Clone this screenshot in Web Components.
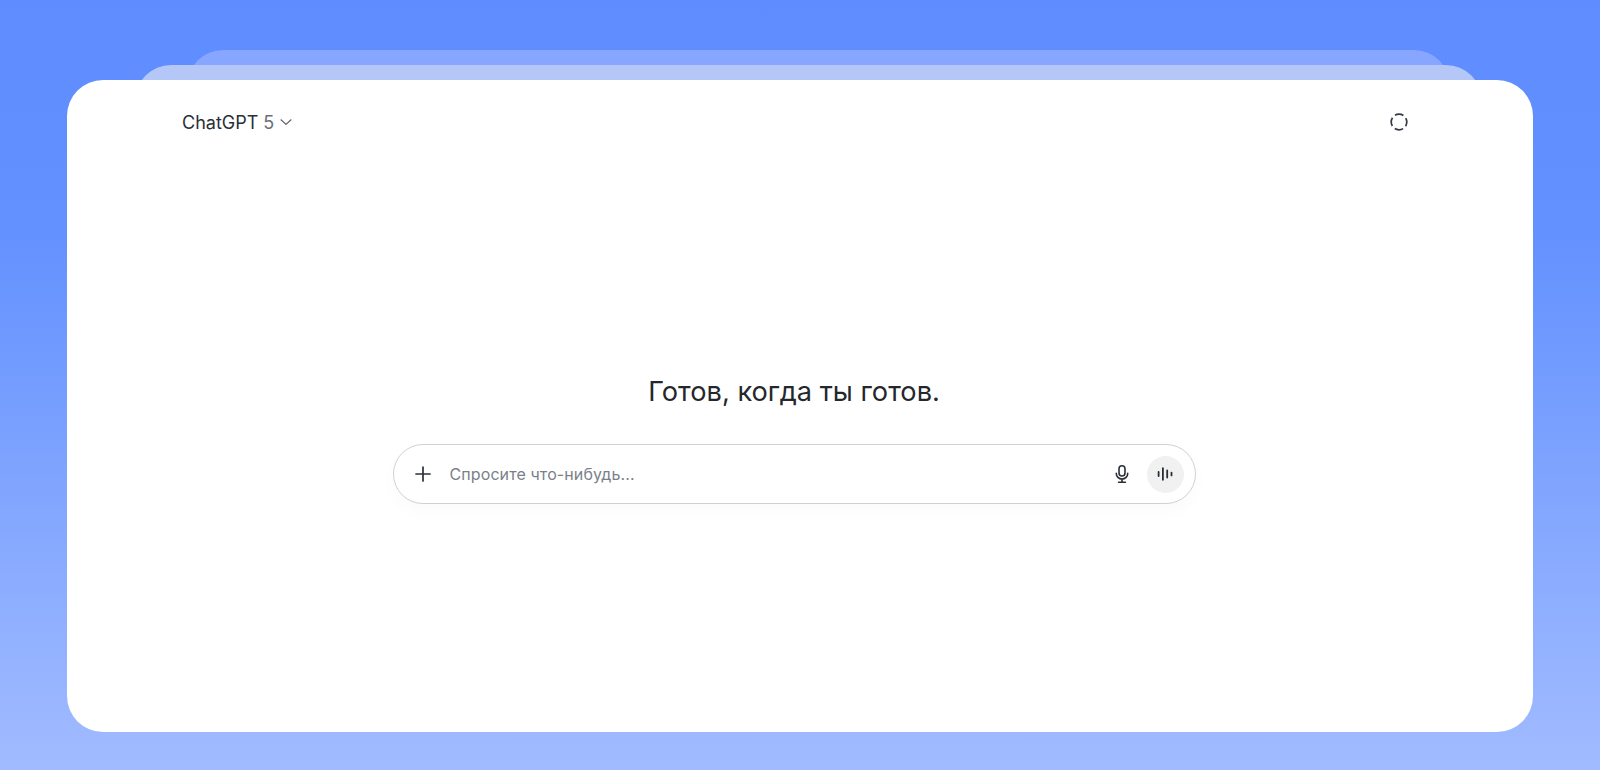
<!DOCTYPE html>
<html lang="ru">
<head>
<meta charset="utf-8">
<title>ChatGPT</title>
<style>
  html, body { margin: 0; height: 100%; }
  body { font-family: Inter, "Noto Sans", sans-serif; overflow: hidden; }
</style>
</head>
<body>
<app-stage>
  <app-window>
    <model-header slot="header" name="ChatGPT" version="5"></model-header>
    <h-title>Готов, когда ты готов.</h-title>
    <chat-composer placeholder="Спросите что-нибудь..."></chat-composer>
  </app-window>
</app-stage>

<script>
class AppStage extends HTMLElement {
    constructor () {
        super();
        var shadowRoot = this.attachShadow({mode: 'open'});
        shadowRoot.innerHTML = `
            <style>
                :host {
                    display: block;
                    box-sizing: border-box;
                    width: 1600px;
                    height: 770px;
                    padding-top: 50px;
                    background: linear-gradient(180deg, #5f8cff 0%, #6391ff 30%, #a1bbff 100%);
                }
                .layer {
                    height: 60px;
                    margin-bottom: -45px;
                    border-radius: 36px 36px 0 0;
                }
                .back { margin-left: 187px; margin-right: 150px; background: #86a6ff; }
                .mid { margin-left: 135px; margin-right: 118px; background: #b4c7f6; }
                .front { margin-left: 67px; margin-right: 67px; }
            </style>
            <div class="layer back"></div>
            <div class="layer mid"></div>
            <div class="front"><slot></slot></div>
        `;
    }
}
customElements.define('app-stage', AppStage);

class AppWindow extends HTMLElement {
    constructor () {
        super();
        var shadowRoot = this.attachShadow({mode: 'open'});
        shadowRoot.innerHTML = `
            <style>
                :host {
                    display: block;
                    box-sizing: border-box;
                    height: 652px;
                    background: #fff;
                    border-radius: 36px;
                    padding: 0 124px 0 115px;
                }
                main {
                    display: flex;
                    flex-direction: column;
                    align-items: center;
                    padding-top: 206px;
                    margin-right: 3px;
                }
            </style>
            <slot name="header"></slot>
            <main><slot></slot></main>
        `;
    }
}
customElements.define('app-window', AppWindow);

class ModelHeader extends HTMLElement {
    constructor () {
        super();
        var shadowRoot = this.attachShadow({mode: 'open'});
        shadowRoot.innerHTML = `
            <style>
                :host {
                    display: flex;
                    align-items: center;
                    justify-content: space-between;
                    height: 84px;
                    color: #2a2f37;
                }
                .model { display: flex; align-items: center; font-size: 18px; }
                .ver { color: #6b7078; margin-left: 5px; }
                svg { display: block; }
                .chev { margin-left: 5px; }
            </style>
            <div class="model">
                <span id="name"></span><span class="ver" id="ver"></span>
                <svg class="chev" width="14" height="14" viewBox="0 0 14 14" fill="none" stroke="#5d626a" stroke-width="1.2" stroke-linecap="round" stroke-linejoin="round"><path d="M2 4.8 7 9.4 12 4.8"/></svg>
            </div>
            <svg width="20" height="20" viewBox="0 0 20 20" fill="none" stroke="#343944" stroke-width="1.7">
                <circle cx="10" cy="10" r="7.8" stroke-dasharray="8.8 3.45" stroke-dashoffset="4.4"/>
            </svg>
        `;
        shadowRoot.querySelector('#name').textContent = this.getAttribute('name');
        shadowRoot.querySelector('#ver').textContent = this.getAttribute('version');
    }
}
customElements.define('model-header', ModelHeader);

class HTitle extends HTMLElement {
    constructor () {
        super();
        var shadowRoot = this.attachShadow({mode: 'open'});
        shadowRoot.innerHTML = `
            <style>
                :host {
                    display: block;
                    font-size: 27.2px;
                    line-height: 44px;
                    color: #24272c;
                    margin-bottom: 30px;
                }
            </style>
            <slot></slot>
        `;
    }
}
customElements.define('h-title', HTitle);

class ChatComposer extends HTMLElement {
    constructor () {
        super();
        var shadowRoot = this.attachShadow({mode: 'open'});
        shadowRoot.innerHTML = `
            <style>
                :host {
                    display: flex;
                    align-items: center;
                    box-sizing: border-box;
                    width: 803px;
                    height: 60px;
                    padding: 0 11px 0 19px;
                    border: 1px solid #cfd1d4;
                    border-radius: 30px;
                    background: #fff;
                    box-shadow: 0 8px 20px rgba(0,0,0,0.02);
                }
                svg { display: block; flex: none; }
                #text { flex: 1; margin-left: 17px; font-size: 16px; letter-spacing: 0.1px; color: #7b808a; }
                .mic { margin-right: 15px; }
                .voice {
                    width: 37px;
                    height: 37px;
                    border-radius: 50%;
                    background: #f1f1f2;
                    display: flex;
                    align-items: center;
                    justify-content: center;
                }
            </style>
            <svg width="20" height="20" viewBox="0 0 20 20" fill="none" stroke="#2c3038" stroke-width="1.7" stroke-linecap="round"><path d="M10 3v14M3 10h14"/></svg>
            <span id="text"></span>
            <svg class="mic" width="20" height="20" viewBox="0 0 20 20" fill="none" stroke="#2a2f37" stroke-width="1.6" stroke-linecap="round"><rect x="7" y="1.8" width="6" height="10.2" rx="3"/><path d="M4.3 9.4a5.7 5.7 0 0 0 11.4 0M10 15.2v3M6.6 18.2h6.8"/></svg>
            <div class="voice">
                <svg width="18" height="18" viewBox="0 0 18 18" fill="none" stroke="#2a2f37" stroke-width="1.8" stroke-linecap="round"><path d="M2.6 7v4M6.9 3.2v11.6M11.2 5.4v7.2M15.5 7.6v2.8"/></svg>
            </div>
        `;
        shadowRoot.querySelector('#text').textContent = this.getAttribute('placeholder');
    }
}
customElements.define('chat-composer', ChatComposer);
</script>
</body>
</html>
